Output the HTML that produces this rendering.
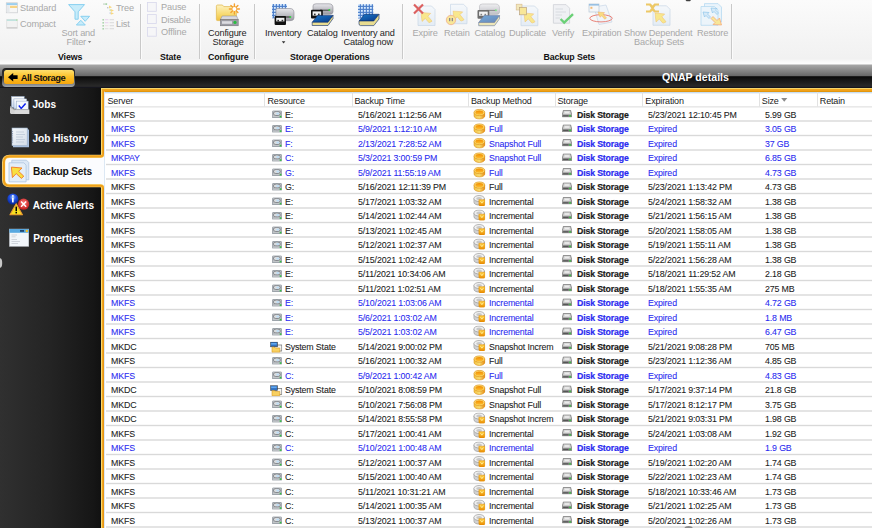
<!DOCTYPE html><html><head><meta charset="utf-8"><style>
*{margin:0;padding:0;box-sizing:border-box}
html,body{width:872px;height:528px;overflow:hidden;background:#fff}
body{position:relative;font-family:"Liberation Sans",sans-serif;}
.a{position:absolute;white-space:nowrap}
#ribbon{position:absolute;left:0;top:0;width:872px;height:64px;background:linear-gradient(#fbfbfb,#f1f1f1 92%,#f8f8f8 96%,#fdfdfd)}
.sep{position:absolute;top:4px;width:1px;height:55px;background:#c9c9c9;box-shadow:1px 0 0 #fbfbfb}
.rt{position:absolute;white-space:nowrap;font-size:9.2px;line-height:9px;letter-spacing:-0.15px;color:#a8a8a8;margin-top:1px}
.rt.en{color:#1e1e1e}
.gl{position:absolute;white-space:nowrap;font-size:8.8px;line-height:9px;font-weight:bold;letter-spacing:-0.12px;color:#111;top:53px}
#bar{position:absolute;left:0;top:64px;width:872px;height:24px;background:linear-gradient(#fafafa 0px,#fafafa 0.4px,#a8a8a8 0.6px,#6a6a6a 11.5px,#5a5a5a 12.2px,#0a0a0a 12.6px,#161616 16px,#2a2a2a 22.4px,#16161e 22.8px,#16161e 24px)}
#nav{position:absolute;left:0;top:88px;width:101px;height:440px;background:linear-gradient(90deg,#303030,#242424 50%,#161616 92%,#111)}
.nt{position:absolute;white-space:nowrap;font-size:10.1px;line-height:10px;font-weight:bold;color:#fff}
#frame{position:absolute;left:101px;top:88px;width:771px;height:440px;border-left:1px solid #f3d27a;border-top:1px solid #f3d27a;}
#frame2{position:absolute;left:102px;top:89px;width:770px;height:439px;border-left:2px solid #f0a21c;border-top:2px solid #f0a21c;}
#grid{position:absolute;left:104px;top:92px;width:768px;height:436px;background:#fff;border-left:1px solid #dce8f4;border-top:1px solid #c8def2;box-shadow:inset 0 1px 0 #eef2f6;overflow:hidden}
.c{position:absolute;white-space:nowrap;font-size:9.4px;line-height:10px;letter-spacing:-0.15px;color:#1a1a1a;-webkit-text-stroke:0.08px currentColor;transform:scaleX(.94);transform-origin:0 0}
.b{color:#2a2af0}
.bd{font-weight:bold;font-size:9.3px;letter-spacing:-0.16px;-webkit-text-stroke:0.2px currentColor}
.h{position:absolute;white-space:nowrap;font-size:9px;line-height:10px;letter-spacing:-0.15px;color:#1a1a1a}
</style></head><body>
<div id="ribbon">
<div class="sep" style="left:139.6px"></div>
<div class="sep" style="left:199.2px"></div>
<div class="sep" style="left:254px"></div>
<div class="sep" style="left:401.8px"></div>
<div class="sep" style="left:731.2px"></div>
<div class="rt" style="left:20px;top:3px">Standard</div>
<div class="rt" style="left:20px;top:19px">Compact</div>
<div class="rt" style="left:61.5px;top:28px">Sort and</div>
<div class="rt" style="left:66.5px;top:37px">Filter</div>
<div class="rt" style="left:116px;top:3px">Tree</div>
<div class="rt" style="left:116px;top:19px">List</div>
<div class="gl" style="left:58px">Views</div>
<div class="rt" style="left:161px;top:2.4px">Pause</div>
<div class="rt" style="left:161px;top:14.9px">Disable</div>
<div class="rt" style="left:161px;top:27.4px">Offline</div>
<div class="gl" style="left:160px">State</div>
<div class="rt en" style="left:208px;top:28px">Configure</div>
<div class="rt en" style="left:212.5px;top:37px">Storage</div>
<div class="gl" style="left:208px">Configure</div>
<div class="rt en" style="left:265px;top:28px">Inventory</div>
<div class="rt en" style="left:307px;top:28px">Catalog</div>
<div class="rt en" style="left:341px;top:28px">Inventory and</div>
<div class="rt en" style="left:343.5px;top:37px">Catalog now</div>
<div class="gl" style="left:290px">Storage Operations</div>
<div class="rt" style="left:412.5px;top:28px">Expire</div>
<div class="rt" style="left:444px;top:28px">Retain</div>
<div class="rt" style="left:474.5px;top:28px">Catalog</div>
<div class="rt" style="left:509px;top:28px">Duplicate</div>
<div class="rt" style="left:552px;top:28px">Verify</div>
<div class="rt" style="left:582px;top:28px">Expiration</div>
<div class="rt" style="left:624px;top:28px">Show Dependent</div>
<div class="rt" style="left:697px;top:28px">Restore</div>
<div class="rt" style="left:634px;top:37px">Backup Sets</div>
<div class="gl" style="left:543.5px">Backup Sets</div>
</div>
<div id="bar"></div>
<div class="a" style="left:662px;top:72px;font-size:10.6px;line-height:11px;font-weight:bold;color:#fff">QNAP details</div>
<div class="a" style="left:2.2px;top:67.8px;width:73.2px;height:18.8px;border-radius:4px;background:linear-gradient(#1e1e1e,#3a3a3a 50%,#a0a6ac)"></div>
<div class="a" style="left:4px;top:69.6px;width:69.6px;height:14.8px;border-radius:2.5px;background:linear-gradient(#ffe070,#fcc22c 45%,#f5a50c)"></div>
<div class="a" style="left:20.8px;top:72.8px;font-size:9.4px;line-height:10px;font-weight:bold;letter-spacing:-0.45px;color:#111">All Storage</div>
<div id="nav"></div>
<div class="nt" style="left:32.5px;top:99.8px">Jobs</div>
<div class="nt" style="left:32.5px;top:133.8px">Job History</div>
<svg class="a" style="left:0;top:0" width="872" height="528"><path d="M104.5 156.4H9.5Q3.5 156.4 3.5 162.4V179.7Q3.5 185.7 9.5 185.7H104.5Z" fill="#fbfcfe"/><path d="M872 89.6H102.6V154.2Q102.6 156.4 100.4 156.4H9.5Q3.6 156.4 3.6 162.4V179.7Q3.6 185.7 9.5 185.7H100.4Q102.6 185.7 102.6 187.9V528" fill="none" stroke="#f5d47a" stroke-width="3.2"/><path d="M872 89.9H102.9V154.2Q102.9 156.4 100.7 156.4H9.5Q3.9 156.4 3.9 162.4V179.7Q3.9 185.7 9.5 185.7H100.7Q102.9 185.7 102.9 187.9V528" fill="none" stroke="#f0a11a" stroke-width="2.1"/><path d="M872 91.5H104.5" fill="none" stroke="#e2960e" stroke-width="1"/><path d="M103.8 91V154.2M103.8 187.9V528" fill="none" stroke="#dc8c0c" stroke-width="0.8"/><path d="M872 88.6H101.6V154.6M101.6 187.5V528" fill="none" stroke="#f8dc70" stroke-width="0.8"/></svg>
<div class="nt" style="left:33px;top:167px;color:#111;letter-spacing:-0.15px">Backup Sets</div>
<div class="nt" style="left:32.7px;top:200.8px">Active Alerts</div>
<div class="nt" style="left:33.2px;top:233.8px">Properties</div>
<div id="grid"></div>
<div class="a" style="left:264.3px;top:92px;width:1px;height:14.5px;background:#e2e2e2"></div>
<div class="a" style="left:352.0px;top:92px;width:1px;height:14.5px;background:#e2e2e2"></div>
<div class="a" style="left:467.9px;top:92px;width:1px;height:14.5px;background:#e2e2e2"></div>
<div class="a" style="left:555.1px;top:92px;width:1px;height:14.5px;background:#e2e2e2"></div>
<div class="a" style="left:642.2px;top:92px;width:1px;height:14.5px;background:#e2e2e2"></div>
<div class="a" style="left:758.7px;top:92px;width:1px;height:14.5px;background:#e2e2e2"></div>
<div class="a" style="left:816.8px;top:92px;width:1px;height:14.5px;background:#e2e2e2"></div>
<div class="h" style="left:107.5px;top:95.5px">Server</div>
<div class="h" style="left:267.5px;top:95.5px">Resource</div>
<div class="h" style="left:354.5px;top:95.5px">Backup Time</div>
<div class="h" style="left:471px;top:95.5px">Backup Method</div>
<div class="h" style="left:557.5px;top:95.5px">Storage</div>
<div class="h" style="left:645.3px;top:95.5px">Expiration</div>
<div class="h" style="left:761.8px;top:95.5px">Size</div>
<div class="h" style="left:819.8px;top:95.5px">Retain</div>
<svg class="a" style="left:780px;top:97px" width="9" height="6"><path d="M1.2 1H7.3L4.25 4.8Z" fill="#8a8a8a"/></svg>
<svg class="a" style="left:0;top:0" width="872" height="528"><rect x="105" y="106.2" width="767" height="1.3" fill="#e4e4e4"/><rect x="106" y="120.30" width="766" height="1.4" fill="#d9d9d9"/><rect x="106" y="134.80" width="766" height="1.4" fill="#d9d9d9"/><rect x="106" y="149.30" width="766" height="1.4" fill="#d9d9d9"/><rect x="106" y="163.80" width="766" height="1.4" fill="#d9d9d9"/><rect x="106" y="178.30" width="766" height="1.4" fill="#d9d9d9"/><rect x="106" y="192.80" width="766" height="1.4" fill="#d9d9d9"/><rect x="106" y="207.30" width="766" height="1.4" fill="#d9d9d9"/><rect x="106" y="221.80" width="766" height="1.4" fill="#d9d9d9"/><rect x="106" y="236.30" width="766" height="1.4" fill="#d9d9d9"/><rect x="106" y="250.80" width="766" height="1.4" fill="#d9d9d9"/><rect x="106" y="265.30" width="766" height="1.4" fill="#d9d9d9"/><rect x="106" y="279.80" width="766" height="1.4" fill="#d9d9d9"/><rect x="106" y="294.30" width="766" height="1.4" fill="#d9d9d9"/><rect x="106" y="308.80" width="766" height="1.4" fill="#d9d9d9"/><rect x="106" y="323.30" width="766" height="1.4" fill="#d9d9d9"/><rect x="106" y="337.80" width="766" height="1.4" fill="#d9d9d9"/><rect x="106" y="352.30" width="766" height="1.4" fill="#d9d9d9"/><rect x="106" y="366.80" width="766" height="1.4" fill="#d9d9d9"/><rect x="106" y="381.30" width="766" height="1.4" fill="#d9d9d9"/><rect x="106" y="395.80" width="766" height="1.4" fill="#d9d9d9"/><rect x="106" y="410.30" width="766" height="1.4" fill="#d9d9d9"/><rect x="106" y="424.80" width="766" height="1.4" fill="#d9d9d9"/><rect x="106" y="439.30" width="766" height="1.4" fill="#d9d9d9"/><rect x="106" y="453.80" width="766" height="1.4" fill="#d9d9d9"/><rect x="106" y="468.30" width="766" height="1.4" fill="#d9d9d9"/><rect x="106" y="482.80" width="766" height="1.4" fill="#d9d9d9"/><rect x="106" y="497.30" width="766" height="1.4" fill="#d9d9d9"/><rect x="106" y="511.80" width="766" height="1.4" fill="#d9d9d9"/><rect x="106" y="526.30" width="766" height="1.4" fill="#d9d9d9"/></svg>
<div class="c" style="left:110.7px;top:109.50px">MKFS</div>
<div class="c" style="left:285px;top:109.50px">E:</div>
<div class="c" style="left:358px;top:109.50px">5/16/2021 1:12:56 AM</div>
<div class="c" style="left:488.7px;top:109.50px">Full</div>
<div class="c bd" style="left:577px;top:109.50px">Disk Storage</div>
<div class="c" style="left:648.2px;top:109.50px">5/23/2021 12:10:45 PM</div>
<div class="c" style="left:764.5px;top:109.50px">5.99 GB</div>
<div class="c b" style="left:110.7px;top:124.00px">MKFS</div>
<div class="c b" style="left:285px;top:124.00px">E:</div>
<div class="c b" style="left:358px;top:124.00px">5/9/2021 1:12:10 AM</div>
<div class="c b" style="left:488.7px;top:124.00px">Full</div>
<div class="c b bd" style="left:577px;top:124.00px">Disk Storage</div>
<div class="c b" style="left:648.2px;top:124.00px">Expired</div>
<div class="c b" style="left:764.5px;top:124.00px">3.05 GB</div>
<div class="c b" style="left:110.7px;top:138.50px">MKFS</div>
<div class="c b" style="left:285px;top:138.50px">F:</div>
<div class="c b" style="left:358px;top:138.50px">2/13/2021 7:28:52 AM</div>
<div class="c b" style="left:488.7px;top:138.50px">Snapshot Full</div>
<div class="c b bd" style="left:577px;top:138.50px">Disk Storage</div>
<div class="c b" style="left:648.2px;top:138.50px">Expired</div>
<div class="c b" style="left:764.5px;top:138.50px">37 GB</div>
<div class="c b" style="left:110.7px;top:153.00px">MKPAY</div>
<div class="c b" style="left:285px;top:153.00px">C:</div>
<div class="c b" style="left:358px;top:153.00px">5/3/2021 3:00:59 PM</div>
<div class="c b" style="left:488.7px;top:153.00px">Snapshot Full</div>
<div class="c b bd" style="left:577px;top:153.00px">Disk Storage</div>
<div class="c b" style="left:648.2px;top:153.00px">Expired</div>
<div class="c b" style="left:764.5px;top:153.00px">6.85 GB</div>
<div class="c b" style="left:110.7px;top:167.50px">MKFS</div>
<div class="c b" style="left:285px;top:167.50px">G:</div>
<div class="c b" style="left:358px;top:167.50px">5/9/2021 11:55:19 AM</div>
<div class="c b" style="left:488.7px;top:167.50px">Full</div>
<div class="c b bd" style="left:577px;top:167.50px">Disk Storage</div>
<div class="c b" style="left:648.2px;top:167.50px">Expired</div>
<div class="c b" style="left:764.5px;top:167.50px">4.73 GB</div>
<div class="c" style="left:110.7px;top:182.00px">MKFS</div>
<div class="c" style="left:285px;top:182.00px">G:</div>
<div class="c" style="left:358px;top:182.00px">5/16/2021 12:11:39 PM</div>
<div class="c" style="left:488.7px;top:182.00px">Full</div>
<div class="c bd" style="left:577px;top:182.00px">Disk Storage</div>
<div class="c" style="left:648.2px;top:182.00px">5/23/2021 1:13:42 PM</div>
<div class="c" style="left:764.5px;top:182.00px">4.73 GB</div>
<div class="c" style="left:110.7px;top:196.50px">MKFS</div>
<div class="c" style="left:285px;top:196.50px">E:</div>
<div class="c" style="left:358px;top:196.50px">5/17/2021 1:03:32 AM</div>
<div class="c" style="left:488.7px;top:196.50px">Incremental</div>
<div class="c bd" style="left:577px;top:196.50px">Disk Storage</div>
<div class="c" style="left:648.2px;top:196.50px">5/24/2021 1:58:32 AM</div>
<div class="c" style="left:764.5px;top:196.50px">1.38 GB</div>
<div class="c" style="left:110.7px;top:211.00px">MKFS</div>
<div class="c" style="left:285px;top:211.00px">E:</div>
<div class="c" style="left:358px;top:211.00px">5/14/2021 1:02:44 AM</div>
<div class="c" style="left:488.7px;top:211.00px">Incremental</div>
<div class="c bd" style="left:577px;top:211.00px">Disk Storage</div>
<div class="c" style="left:648.2px;top:211.00px">5/21/2021 1:56:15 AM</div>
<div class="c" style="left:764.5px;top:211.00px">1.38 GB</div>
<div class="c" style="left:110.7px;top:225.50px">MKFS</div>
<div class="c" style="left:285px;top:225.50px">E:</div>
<div class="c" style="left:358px;top:225.50px">5/13/2021 1:02:45 AM</div>
<div class="c" style="left:488.7px;top:225.50px">Incremental</div>
<div class="c bd" style="left:577px;top:225.50px">Disk Storage</div>
<div class="c" style="left:648.2px;top:225.50px">5/20/2021 1:58:05 AM</div>
<div class="c" style="left:764.5px;top:225.50px">1.38 GB</div>
<div class="c" style="left:110.7px;top:240.00px">MKFS</div>
<div class="c" style="left:285px;top:240.00px">E:</div>
<div class="c" style="left:358px;top:240.00px">5/12/2021 1:02:37 AM</div>
<div class="c" style="left:488.7px;top:240.00px">Incremental</div>
<div class="c bd" style="left:577px;top:240.00px">Disk Storage</div>
<div class="c" style="left:648.2px;top:240.00px">5/19/2021 1:55:11 AM</div>
<div class="c" style="left:764.5px;top:240.00px">1.38 GB</div>
<div class="c" style="left:110.7px;top:254.50px">MKFS</div>
<div class="c" style="left:285px;top:254.50px">E:</div>
<div class="c" style="left:358px;top:254.50px">5/15/2021 1:02:42 AM</div>
<div class="c" style="left:488.7px;top:254.50px">Incremental</div>
<div class="c bd" style="left:577px;top:254.50px">Disk Storage</div>
<div class="c" style="left:648.2px;top:254.50px">5/22/2021 1:56:28 AM</div>
<div class="c" style="left:764.5px;top:254.50px">1.38 GB</div>
<div class="c" style="left:110.7px;top:269.00px">MKFS</div>
<div class="c" style="left:285px;top:269.00px">E:</div>
<div class="c" style="left:358px;top:269.00px">5/11/2021 10:34:06 AM</div>
<div class="c" style="left:488.7px;top:269.00px">Incremental</div>
<div class="c bd" style="left:577px;top:269.00px">Disk Storage</div>
<div class="c" style="left:648.2px;top:269.00px">5/18/2021 11:29:52 AM</div>
<div class="c" style="left:764.5px;top:269.00px">2.18 GB</div>
<div class="c" style="left:110.7px;top:283.50px">MKFS</div>
<div class="c" style="left:285px;top:283.50px">E:</div>
<div class="c" style="left:358px;top:283.50px">5/11/2021 1:02:51 AM</div>
<div class="c" style="left:488.7px;top:283.50px">Incremental</div>
<div class="c bd" style="left:577px;top:283.50px">Disk Storage</div>
<div class="c" style="left:648.2px;top:283.50px">5/18/2021 1:55:35 AM</div>
<div class="c" style="left:764.5px;top:283.50px">275 MB</div>
<div class="c b" style="left:110.7px;top:298.00px">MKFS</div>
<div class="c b" style="left:285px;top:298.00px">E:</div>
<div class="c b" style="left:358px;top:298.00px">5/10/2021 1:03:06 AM</div>
<div class="c b" style="left:488.7px;top:298.00px">Incremental</div>
<div class="c b bd" style="left:577px;top:298.00px">Disk Storage</div>
<div class="c b" style="left:648.2px;top:298.00px">Expired</div>
<div class="c b" style="left:764.5px;top:298.00px">4.72 GB</div>
<div class="c b" style="left:110.7px;top:312.50px">MKFS</div>
<div class="c b" style="left:285px;top:312.50px">E:</div>
<div class="c b" style="left:358px;top:312.50px">5/6/2021 1:03:02 AM</div>
<div class="c b" style="left:488.7px;top:312.50px">Incremental</div>
<div class="c b bd" style="left:577px;top:312.50px">Disk Storage</div>
<div class="c b" style="left:648.2px;top:312.50px">Expired</div>
<div class="c b" style="left:764.5px;top:312.50px">1.8 MB</div>
<div class="c b" style="left:110.7px;top:327.00px">MKFS</div>
<div class="c b" style="left:285px;top:327.00px">E:</div>
<div class="c b" style="left:358px;top:327.00px">5/5/2021 1:03:02 AM</div>
<div class="c b" style="left:488.7px;top:327.00px">Incremental</div>
<div class="c b bd" style="left:577px;top:327.00px">Disk Storage</div>
<div class="c b" style="left:648.2px;top:327.00px">Expired</div>
<div class="c b" style="left:764.5px;top:327.00px">6.47 GB</div>
<div class="c" style="left:110.7px;top:341.50px">MKDC</div>
<div class="c" style="left:285px;top:341.50px">System State</div>
<div class="c" style="left:358px;top:341.50px">5/14/2021 9:00:02 PM</div>
<div class="c" style="left:488.7px;top:341.50px">Snapshot Increm</div>
<div class="c bd" style="left:577px;top:341.50px">Disk Storage</div>
<div class="c" style="left:648.2px;top:341.50px">5/21/2021 9:08:28 PM</div>
<div class="c" style="left:764.5px;top:341.50px">705 MB</div>
<div class="c" style="left:110.7px;top:356.00px">MKFS</div>
<div class="c" style="left:285px;top:356.00px">C:</div>
<div class="c" style="left:358px;top:356.00px">5/16/2021 1:00:32 AM</div>
<div class="c" style="left:488.7px;top:356.00px">Full</div>
<div class="c bd" style="left:577px;top:356.00px">Disk Storage</div>
<div class="c" style="left:648.2px;top:356.00px">5/23/2021 1:12:36 AM</div>
<div class="c" style="left:764.5px;top:356.00px">4.85 GB</div>
<div class="c b" style="left:110.7px;top:370.50px">MKFS</div>
<div class="c b" style="left:285px;top:370.50px">C:</div>
<div class="c b" style="left:358px;top:370.50px">5/9/2021 1:00:42 AM</div>
<div class="c b" style="left:488.7px;top:370.50px">Full</div>
<div class="c b bd" style="left:577px;top:370.50px">Disk Storage</div>
<div class="c b" style="left:648.2px;top:370.50px">Expired</div>
<div class="c b" style="left:764.5px;top:370.50px">4.83 GB</div>
<div class="c" style="left:110.7px;top:385.00px">MKDC</div>
<div class="c" style="left:285px;top:385.00px">System State</div>
<div class="c" style="left:358px;top:385.00px">5/10/2021 8:08:59 PM</div>
<div class="c" style="left:488.7px;top:385.00px">Snapshot Full</div>
<div class="c bd" style="left:577px;top:385.00px">Disk Storage</div>
<div class="c" style="left:648.2px;top:385.00px">5/17/2021 9:37:14 PM</div>
<div class="c" style="left:764.5px;top:385.00px">21.8 GB</div>
<div class="c" style="left:110.7px;top:399.50px">MKDC</div>
<div class="c" style="left:285px;top:399.50px">C:</div>
<div class="c" style="left:358px;top:399.50px">5/10/2021 7:56:08 PM</div>
<div class="c" style="left:488.7px;top:399.50px">Snapshot Full</div>
<div class="c bd" style="left:577px;top:399.50px">Disk Storage</div>
<div class="c" style="left:648.2px;top:399.50px">5/17/2021 8:12:17 PM</div>
<div class="c" style="left:764.5px;top:399.50px">3.75 GB</div>
<div class="c" style="left:110.7px;top:414.00px">MKDC</div>
<div class="c" style="left:285px;top:414.00px">C:</div>
<div class="c" style="left:358px;top:414.00px">5/14/2021 8:55:58 PM</div>
<div class="c" style="left:488.7px;top:414.00px">Snapshot Increm</div>
<div class="c bd" style="left:577px;top:414.00px">Disk Storage</div>
<div class="c" style="left:648.2px;top:414.00px">5/21/2021 9:03:31 PM</div>
<div class="c" style="left:764.5px;top:414.00px">1.98 GB</div>
<div class="c" style="left:110.7px;top:428.50px">MKFS</div>
<div class="c" style="left:285px;top:428.50px">C:</div>
<div class="c" style="left:358px;top:428.50px">5/17/2021 1:00:41 AM</div>
<div class="c" style="left:488.7px;top:428.50px">Incremental</div>
<div class="c bd" style="left:577px;top:428.50px">Disk Storage</div>
<div class="c" style="left:648.2px;top:428.50px">5/24/2021 1:03:08 AM</div>
<div class="c" style="left:764.5px;top:428.50px">1.92 GB</div>
<div class="c b" style="left:110.7px;top:443.00px">MKFS</div>
<div class="c b" style="left:285px;top:443.00px">C:</div>
<div class="c b" style="left:358px;top:443.00px">5/10/2021 1:00:48 AM</div>
<div class="c b" style="left:488.7px;top:443.00px">Incremental</div>
<div class="c b bd" style="left:577px;top:443.00px">Disk Storage</div>
<div class="c b" style="left:648.2px;top:443.00px">Expired</div>
<div class="c b" style="left:764.5px;top:443.00px">1.9 GB</div>
<div class="c" style="left:110.7px;top:457.50px">MKFS</div>
<div class="c" style="left:285px;top:457.50px">C:</div>
<div class="c" style="left:358px;top:457.50px">5/12/2021 1:00:37 AM</div>
<div class="c" style="left:488.7px;top:457.50px">Incremental</div>
<div class="c bd" style="left:577px;top:457.50px">Disk Storage</div>
<div class="c" style="left:648.2px;top:457.50px">5/19/2021 1:02:20 AM</div>
<div class="c" style="left:764.5px;top:457.50px">1.74 GB</div>
<div class="c" style="left:110.7px;top:472.00px">MKFS</div>
<div class="c" style="left:285px;top:472.00px">C:</div>
<div class="c" style="left:358px;top:472.00px">5/15/2021 1:00:40 AM</div>
<div class="c" style="left:488.7px;top:472.00px">Incremental</div>
<div class="c bd" style="left:577px;top:472.00px">Disk Storage</div>
<div class="c" style="left:648.2px;top:472.00px">5/22/2021 1:02:23 AM</div>
<div class="c" style="left:764.5px;top:472.00px">1.74 GB</div>
<div class="c" style="left:110.7px;top:486.50px">MKFS</div>
<div class="c" style="left:285px;top:486.50px">C:</div>
<div class="c" style="left:358px;top:486.50px">5/11/2021 10:31:21 AM</div>
<div class="c" style="left:488.7px;top:486.50px">Incremental</div>
<div class="c bd" style="left:577px;top:486.50px">Disk Storage</div>
<div class="c" style="left:648.2px;top:486.50px">5/18/2021 10:33:46 AM</div>
<div class="c" style="left:764.5px;top:486.50px">1.73 GB</div>
<div class="c" style="left:110.7px;top:501.00px">MKFS</div>
<div class="c" style="left:285px;top:501.00px">C:</div>
<div class="c" style="left:358px;top:501.00px">5/14/2021 1:00:35 AM</div>
<div class="c" style="left:488.7px;top:501.00px">Incremental</div>
<div class="c bd" style="left:577px;top:501.00px">Disk Storage</div>
<div class="c" style="left:648.2px;top:501.00px">5/21/2021 1:02:25 AM</div>
<div class="c" style="left:764.5px;top:501.00px">1.73 GB</div>
<div class="c" style="left:110.7px;top:515.50px">MKFS</div>
<div class="c" style="left:285px;top:515.50px">C:</div>
<div class="c" style="left:358px;top:515.50px">5/13/2021 1:00:37 AM</div>
<div class="c" style="left:488.7px;top:515.50px">Incremental</div>
<div class="c bd" style="left:577px;top:515.50px">Disk Storage</div>
<div class="c" style="left:648.2px;top:515.50px">5/20/2021 1:02:26 AM</div>
<div class="c" style="left:764.5px;top:515.50px">1.73 GB</div>
<svg class="a" style="left:0;top:0" width="872" height="528">
<defs>
<linearGradient id="gHdd" x1="0" y1="0" x2="0" y2="1"><stop offset="0" stop-color="#9aa2aa"/><stop offset="1" stop-color="#5c636b"/></linearGradient>
<linearGradient id="gSto" x1="0" y1="0" x2="0" y2="1"><stop offset="0" stop-color="#d4d4d4"/><stop offset="0.55" stop-color="#b4b4b4"/><stop offset="1" stop-color="#6e6e6e"/></linearGradient>
<linearGradient id="gCoin" x1="0" y1="0" x2="1" y2="0"><stop offset="0" stop-color="#f2c040"/><stop offset="0.5" stop-color="#f8dc70"/><stop offset="1" stop-color="#e88a10"/></linearGradient>
<linearGradient id="gCoinTop" x1="0" y1="0" x2="0" y2="1"><stop offset="0" stop-color="#f08a00"/><stop offset="1" stop-color="#ffc030"/></linearGradient>
<linearGradient id="gShield" x1="0" y1="0" x2="0" y2="1"><stop offset="0" stop-color="#ffd040"/><stop offset="1" stop-color="#e88800"/></linearGradient>
<symbol id="hdd" viewBox="0 0 10 8" width="10" height="8">
  <path d="M0.9 0.2H9.1L9.8 1.2V7.8H0.2V1.2Z" fill="#8c949c"/>
  <rect x="0.9" y="0.9" width="8.2" height="5" fill="#b8bcc0"/>
  <ellipse cx="4.9" cy="3.3" rx="3.6" ry="2.2" fill="#707478"/>
  <ellipse cx="4.9" cy="3.2" rx="3" ry="1.7" fill="#dadcde"/>
  <ellipse cx="5.8" cy="3.4" rx="1.6" ry="1.1" fill="#bcdcf4"/>
  <rect x="0.9" y="5.9" width="8.2" height="1.2" fill="#c8cacc"/>
  <rect x="7.7" y="5.6" width="1.7" height="1.6" fill="#30c040"/>
</symbol>
<symbol id="sto" viewBox="0 0 10 7.5" width="10" height="7.5">
  <path d="M1.4 0.4H8.6L9.7 4.6V7.1H0.3V4.6Z" fill="#a8a8a8" stroke="#666" stroke-width="0.6"/>
  <path d="M1.9 1H8.1L8.9 4.4H1.1Z" fill="#d6d6d6"/><path d="M3 1.8H6.8L7.2 3.4H2.6Z" fill="#ececec"/>
  <rect x="0.35" y="4.9" width="9.3" height="2.2" fill="#8c8c8c"/>
  <rect x="1.1" y="5.5" width="5.4" height="0.9" fill="#4a4a4a"/>
  <rect x="7.1" y="5.3" width="2" height="1.4" fill="#38c040"/>
</symbol>
<symbol id="coin" viewBox="0 0 12 11" width="12" height="11">
  <path d="M0.5 3.7V7A5.5 3.2 0 0 0 11.5 7V3.7Z" fill="url(#gCoin)" stroke="#d88a10" stroke-width="0.6"/>
  <ellipse cx="6" cy="3.7" rx="5.5" ry="3.2" fill="#fad870" stroke="#d88a10" stroke-width="0.6"/>
  <ellipse cx="6" cy="3.8" rx="4" ry="2.2" fill="url(#gCoinTop)"/>
</symbol>
<symbol id="inc" viewBox="0 0 12 11" width="12" height="11">
  <path d="M0.5 3.4V7A5.3 3 0 0 0 11.1 7V3.4Z" fill="#d2d2d2" stroke="#8c8c8c" stroke-width="0.6"/>
  <ellipse cx="5.8" cy="3.4" rx="5.3" ry="3" fill="#f0f0f0" stroke="#8c8c8c" stroke-width="0.6"/>
  <ellipse cx="5.8" cy="3.5" rx="2.9" ry="1.5" fill="#c8c8c8"/>
  <path d="M5.6 4.6H11.6V9.4Q11.6 11 9.6 11H7.4Q5.6 11 5.6 9.4Z" fill="url(#gShield)" stroke="#e08a00" stroke-width="0.5"/>
  <path d="M7.2 6L8.6 8.1L10 6" fill="none" stroke="#fff2a0" stroke-width="0.9"/>
</symbol>
<symbol id="sys" viewBox="0 0 12 11" width="12" height="11">
  <rect x="4.2" y="3.2" width="7.4" height="6" fill="#f4f4f4" stroke="#7a7a7a" stroke-width="0.8"/>
  <rect x="0.2" y="0.2" width="7" height="4.8" fill="#3070c0" stroke="#3a3a3a" stroke-width="0.6"/>
  <rect x="1" y="1.2" width="5.4" height="1.6" fill="#60a8f0"/>
  <path d="M1.8 5.4H4.6L5.3 6.2H9.6V10.4H1.8Z" fill="#f8d060" stroke="#d89a20" stroke-width="0.6"/>
</symbol>
</defs>
<use href="#hdd" x="272" y="110.20"/><use href="#coin" x="473.4" y="108.80"/><use href="#sto" x="562" y="109.90"/><use href="#hdd" x="272" y="124.70"/><use href="#coin" x="473.4" y="123.30"/><use href="#sto" x="562" y="124.40"/><use href="#hdd" x="272" y="139.20"/><use href="#coin" x="473.4" y="137.80"/><use href="#sto" x="562" y="138.90"/><use href="#hdd" x="272" y="153.70"/><use href="#coin" x="473.4" y="152.30"/><use href="#sto" x="562" y="153.40"/><use href="#hdd" x="272" y="168.20"/><use href="#coin" x="473.4" y="166.80"/><use href="#sto" x="562" y="167.90"/><use href="#hdd" x="272" y="182.70"/><use href="#coin" x="473.4" y="181.30"/><use href="#sto" x="562" y="182.40"/><use href="#hdd" x="272" y="197.20"/><use href="#inc" x="473.3" y="195.10"/><use href="#sto" x="562" y="196.90"/><use href="#hdd" x="272" y="211.70"/><use href="#inc" x="473.3" y="209.60"/><use href="#sto" x="562" y="211.40"/><use href="#hdd" x="272" y="226.20"/><use href="#inc" x="473.3" y="224.10"/><use href="#sto" x="562" y="225.90"/><use href="#hdd" x="272" y="240.70"/><use href="#inc" x="473.3" y="238.60"/><use href="#sto" x="562" y="240.40"/><use href="#hdd" x="272" y="255.20"/><use href="#inc" x="473.3" y="253.10"/><use href="#sto" x="562" y="254.90"/><use href="#hdd" x="272" y="269.70"/><use href="#inc" x="473.3" y="267.60"/><use href="#sto" x="562" y="269.40"/><use href="#hdd" x="272" y="284.20"/><use href="#inc" x="473.3" y="282.10"/><use href="#sto" x="562" y="283.90"/><use href="#hdd" x="272" y="298.70"/><use href="#inc" x="473.3" y="296.60"/><use href="#sto" x="562" y="298.40"/><use href="#hdd" x="272" y="313.20"/><use href="#inc" x="473.3" y="311.10"/><use href="#sto" x="562" y="312.90"/><use href="#hdd" x="272" y="327.70"/><use href="#inc" x="473.3" y="325.60"/><use href="#sto" x="562" y="327.40"/><use href="#sys" x="270.2" y="341.80"/><use href="#inc" x="473.3" y="340.10"/><use href="#sto" x="562" y="341.90"/><use href="#hdd" x="272" y="356.70"/><use href="#coin" x="473.4" y="355.30"/><use href="#sto" x="562" y="356.40"/><use href="#hdd" x="272" y="371.20"/><use href="#coin" x="473.4" y="369.80"/><use href="#sto" x="562" y="370.90"/><use href="#sys" x="270.2" y="385.30"/><use href="#coin" x="473.4" y="384.30"/><use href="#sto" x="562" y="385.40"/><use href="#hdd" x="272" y="400.20"/><use href="#coin" x="473.4" y="398.80"/><use href="#sto" x="562" y="399.90"/><use href="#hdd" x="272" y="414.70"/><use href="#inc" x="473.3" y="412.60"/><use href="#sto" x="562" y="414.40"/><use href="#hdd" x="272" y="429.20"/><use href="#inc" x="473.3" y="427.10"/><use href="#sto" x="562" y="428.90"/><use href="#hdd" x="272" y="443.70"/><use href="#inc" x="473.3" y="441.60"/><use href="#sto" x="562" y="443.40"/><use href="#hdd" x="272" y="458.20"/><use href="#inc" x="473.3" y="456.10"/><use href="#sto" x="562" y="457.90"/><use href="#hdd" x="272" y="472.70"/><use href="#inc" x="473.3" y="470.60"/><use href="#sto" x="562" y="472.40"/><use href="#hdd" x="272" y="487.20"/><use href="#inc" x="473.3" y="485.10"/><use href="#sto" x="562" y="486.90"/><use href="#hdd" x="272" y="501.70"/><use href="#inc" x="473.3" y="499.60"/><use href="#sto" x="562" y="501.40"/><use href="#hdd" x="272" y="516.20"/><use href="#inc" x="473.3" y="514.10"/><use href="#sto" x="562" y="515.90"/>
<defs>
<linearGradient id="gFold" x1="0" y1="0" x2="0" y2="1"><stop offset="0" stop-color="#fdf2c0"/><stop offset="0.6" stop-color="#f8da70"/><stop offset="1" stop-color="#f0c040"/></linearGradient>
<linearGradient id="gBook" x1="0" y1="0" x2="1" y2="1"><stop offset="0" stop-color="#1a78c8"/><stop offset="1" stop-color="#0a3a8a"/></linearGradient>
<linearGradient id="gDrv" x1="0" y1="0" x2="0" y2="1"><stop offset="0" stop-color="#e8e8ec"/><stop offset="1" stop-color="#9a9aa2"/></linearGradient>
<linearGradient id="gDoc" x1="0" y1="0" x2="0" y2="1"><stop offset="0" stop-color="#f4f8fc"/><stop offset="1" stop-color="#dce8f4"/></linearGradient>
<pattern id="pGrid" x="0" y="0" width="3" height="3" patternUnits="userSpaceOnUse"><rect width="3" height="3" fill="#4a7cc8"/><rect x="0.9" y="0.9" width="1.9" height="1.9" fill="#b8d8fa"/><rect x="1.3" y="1.3" width="1.1" height="1.1" fill="#f4faff"/></pattern>
<symbol id="arrowY" viewBox="0 0 12 11" width="12" height="11">
  <path d="M0.4 0.4L10.2 1.4L7.4 4.2L11.6 9.2L8.6 10.8L4.8 6.4L1.6 9.4Z" fill="#f8e060" stroke="#f0b040" stroke-width="0.6"/>
</symbol>
</defs>
<!-- Standard -->
<g opacity="0.75">
 <rect x="6.3" y="2.8" width="11.2" height="10" fill="#f6f6f6" stroke="#b8bcc0" stroke-width="0.7"/>
 <rect x="6.6" y="3.1" width="10.6" height="2" fill="#7cc0ec"/>
 <rect x="10" y="5.8" width="7.2" height="2.2" fill="#f8c860"/>
 <rect x="6.6" y="5.2" width="3" height="7.3" fill="#e2e6ea"/>
</g>
<!-- Compact -->
<g opacity="0.8">
 <rect x="6.8" y="19.6" width="10.4" height="8.8" fill="#f2f2f2" stroke="#d0d0d0" stroke-width="0.6"/>
 <rect x="6.8" y="19.6" width="10.4" height="1.1" fill="#9ad8d0"/>
 <rect x="16.2" y="19.4" width="1.2" height="1.2" fill="#a0d880"/>
 <rect x="6.8" y="27" width="10.4" height="1.4" fill="#c8c8c8"/>
</g>
<!-- Funnel -->
<g fill="#c8ecfa" stroke="#88d0f0" stroke-width="1">
 <path d="M68.6 4.6H84.5L78.2 11.8V19.2H75V11.8Z"/>
 <path d="M80.8 16.3H89.6L85.2 21.3Z"/>
 <path d="M76.4 25H85.3L80.8 20.3Z"/>
</g>
<path d="M87.9 40.9H91.3L89.6 43Z" fill="#8a8a8a"/>
<!-- Tree -->
<g opacity="0.65">
 <rect x="103" y="3.3" width="2" height="1.6" fill="#c0d0c0"/><rect x="105.3" y="3.2" width="1.8" height="1.8" fill="#80c080"/>
 <rect x="107" y="7" width="1.4" height="1.4" fill="#a8a8b0"/>
 <path d="M109 5.5L112 7.2L109 8.6Z" fill="#f8c840"/>
 <rect x="109.6" y="9.3" width="1.2" height="1.6" fill="#90c890"/><path d="M110.8 9L114 10.5L110.8 12Z" fill="#f8c840"/>
 <rect x="109.6" y="12.3" width="1.2" height="1.6" fill="#a0b0e0"/><path d="M110.8 12L114 13.4L110.8 14.8Z" fill="#f8c840"/>
</g>
<!-- List -->
<g opacity="0.6">
 <rect x="102.4" y="19" width="1.6" height="1.6" fill="#80c080"/><rect x="104.8" y="19.2" width="3.6" height="1" fill="#e0b8e8"/><rect x="109.6" y="19.2" width="4.4" height="1" fill="#c8c8c8"/>
 <rect x="102.4" y="22" width="1.6" height="1.6" fill="#80c080"/><rect x="104.8" y="22.2" width="3.6" height="1" fill="#e0b8e8"/><rect x="109.6" y="22.2" width="4.4" height="1" fill="#c8c8c8"/>
 <rect x="102.4" y="25" width="1.6" height="1.6" fill="#80c080"/><rect x="104.8" y="25.2" width="3.6" height="1" fill="#e8d0d8"/><rect x="109.6" y="25.2" width="4.4" height="1" fill="#c8c8c8"/>
 <rect x="102.4" y="28" width="1.6" height="1.6" fill="#80c080"/><rect x="104.8" y="28.2" width="3.6" height="1" fill="#d0d0d0"/><rect x="109.6" y="28.2" width="4.4" height="1" fill="#c8c8c8"/>
</g>
<!-- checkboxes -->
<g fill="#f6f6f8" stroke="#d8d8ec" stroke-width="0.8">
 <rect x="147.5" y="2.5" width="8.8" height="8.8"/>
 <rect x="147.5" y="14.6" width="8.8" height="8.8"/>
 <rect x="147.5" y="27.4" width="8.8" height="8.8"/>
</g>
<!-- Configure storage -->
<g>
 <path d="M216.4 6.2Q216.4 5 217.6 5H222.4L223.8 6.6H235.2Q236.4 6.6 236.4 7.8V19.4Q236.4 20.6 235.2 20.6H217.6Q216.4 20.6 216.4 19.4Z" fill="url(#gFold)" stroke="#e2bc58" stroke-width="0.8"/>
 <g stroke="#f5a030" stroke-width="1.4" stroke-linecap="round">
  <path d="M234.4 4V14M229.4 9H239.4M230.9 5.5L237.9 12.5M237.9 5.5L230.9 12.5"/>
 </g>
 <circle cx="234.4" cy="9" r="2" fill="#fff"/>
 <path d="M222.2 16H236.6L238.2 19.6H220.4Z" fill="#d8d8de" stroke="#8a8a92" stroke-width="0.5"/>
 <rect x="220.4" y="19.6" width="17.8" height="6.2" fill="#9c9ca4" stroke="#6a6a72" stroke-width="0.5"/>
 <rect x="222" y="21.2" width="10" height="2.6" fill="#dcdce2"/>
 <circle cx="235" cy="22.4" r="1.6" fill="#28c040"/>
</g>
<!-- Inventory -->
<g>
 <rect x="272" y="4" width="15" height="14.3" fill="url(#pGrid)"/>
 <path d="M276 9.5Q276 8.5 278 8.5H290Q294 8.5 294 13V18Q294 20.7 290 20.7H276Z" fill="url(#gDrv)" stroke="#8a8a92" stroke-width="0.6"/>
 <rect x="279" y="16.4" width="11" height="1.2" fill="#404040"/>
 <circle cx="290.3" cy="17" r="1" fill="#30d040"/>
 <rect x="274.6" y="16" width="11.4" height="9" rx="1" fill="#111"/>
 <rect x="276.2" y="17.8" width="8.2" height="3.6" fill="#f0f0f0"/>
 <rect x="277.4" y="19.8" width="1.6" height="1.6" fill="#333"/><rect x="281.6" y="19.8" width="1.6" height="1.6" fill="#333"/>
 <path d="M281.8 41.3H285.4L283.6 43.4Z" fill="#333"/>
</g>
<!-- Catalog (enabled) -->
<g id="catIcon">
 <path d="M313 6Q313 3.8 316 3.8H329Q333 3.8 333 8V12Q333 14.3 329 14.3H313Z" fill="url(#gDrv)" stroke="#8a8a92" stroke-width="0.6"/>
 <rect x="320" y="9.7" width="9" height="1" fill="#404040"/>
 <circle cx="329.4" cy="10" r="1" fill="#30d040"/>
 <rect x="311" y="9.8" width="11.8" height="8.7" rx="1" fill="#111"/>
 <rect x="312.6" y="11.4" width="8.6" height="4.2" fill="#f0f0f0"/>
 <rect x="314" y="13.6" width="1.6" height="1.6" fill="#333"/><rect x="318" y="13.6" width="1.6" height="1.6" fill="#333"/>
 <path d="M312.2 22.3L317.6 15.4H333L328 22.3Z" fill="url(#gBook)" stroke="#0a2a6a" stroke-width="0.6"/>
 <path d="M312.2 22.3H328L333 15.4V18.6L328 25.5H312.2Z" fill="#e8dc90" stroke="#0a2a6a" stroke-width="0.6"/>
</g>
<!-- Inventory and catalog now -->
<g>
 <rect x="358" y="4.2" width="15.3" height="14.3" fill="url(#pGrid)"/>
 <path d="M359 21L364.5 14.3H379L373.8 21Z" fill="url(#gBook)" stroke="#0a2a6a" stroke-width="0.6"/>
 <path d="M359 21H373.8L379 14.3V19L373.8 25.6H360.5Q359 25.6 359 23.5Z" fill="#e8dc90" stroke="#0a2a6a" stroke-width="0.6"/>
</g>
<!-- Backup sets group (disabled) -->
<g opacity="0.7">
 <!-- Expire -->
 <path d="M418 6H431.5L435 9.5V25.5H418Z" fill="url(#gDoc)" stroke="#b4c8e0" stroke-width="0.7"/>
 <use href="#arrowY" x="420.5" y="12"/>
 <path d="M414 4.5L423 13.5M423 4.5L414 13.5" stroke="#d02020" stroke-width="2.2"/>
 <!-- Retain -->
 <path d="M450.5 4.3H463.5L467 7.8V23.7H450.5Z" fill="url(#gDoc)" stroke="#b4c8e0" stroke-width="0.7"/>
 <use href="#arrowY" x="452.5" y="10.5"/>
 <circle cx="451" cy="20" r="4.7" fill="#f8e070" stroke="#f09060" stroke-width="0.8"/>
 <rect x="449.3" y="18" width="0.9" height="3.2" fill="#202060"/><rect x="451.8" y="18" width="0.9" height="3.2" fill="#202060"/>
</g>
<g opacity="0.6" transform="translate(166.5,0.2)">
 <use href="#catIcon"/>
</g>
<g opacity="0.7">
 <!-- Duplicate -->
 <path d="M521 6H534.5L537.8 9.3V25.7H521Z" fill="url(#gDoc)" stroke="#b4c8e0" stroke-width="0.7"/>
 <use href="#arrowY" x="523.5" y="12.5"/>
 <rect x="516.2" y="4.2" width="5.8" height="5.8" fill="#f0e0a0" stroke="#c8a060" stroke-width="0.6"/>
 <rect x="519.6" y="7.4" width="7" height="7.4" fill="#f8e070" stroke="#a08050" stroke-width="0.7"/>
 <!-- Verify -->
 <path d="M553.4 4.6H566L569.6 8.2V23.2H553.4Z" fill="#eceef2" stroke="#b8bcc4" stroke-width="0.7"/>
 <path d="M555.5 9H563M555.5 12H566M555.5 15H562M555.5 18H560" stroke="#c4c8d0" stroke-width="0.8"/>
 <path d="M560.6 19L564.2 22.6L573 14.2" fill="none" stroke="#30c040" stroke-width="2.4"/>
 <!-- Expiration -->
 <path d="M594 7L606 5L612 22L599 24.5Z" fill="#eef4fa" stroke="#b4c8e0" stroke-width="0.7"/>
 <rect x="589" y="4" width="10" height="8" fill="#f4f6f8" stroke="#8ea8c0" stroke-width="0.6"/>
 <rect x="589" y="4" width="10" height="1.6" fill="#70a8d8"/>
 <rect x="590.4" y="6.8" width="2" height="2" fill="#f0a040"/>
 <ellipse cx="601" cy="18.3" rx="11.2" ry="3.6" fill="none" stroke="#e04030" stroke-width="0.9"/>
 <path d="M598 12L604.5 12.6L603.2 14.2L606.5 18L604.7 19.2L601.8 15.8L600 17.2Z" fill="#f8d050" stroke="#f09030" stroke-width="0.5"/>
 <!-- Show dependent -->
 <path d="M653 5.8H666.5L670 9.3V25.3H653Z" fill="url(#gDoc)" stroke="#b4c8e0" stroke-width="0.7"/>
 <use href="#arrowY" x="654.5" y="12.6"/>
 <path d="M646 4.6H650.2L652.5 7L654.8 4.6H659M646 11.6H650.2L652.5 9.2L654.8 11.6H659M650 4.6L655 11.6M655 4.6L650 11.6" fill="none" stroke="#e8b428" stroke-width="2"/>
 <!-- Restore -->
 <path d="M704.5 3.6H718L721.5 7.1V22H704.5Z" fill="#e4f2fc" stroke="#90c8ec" stroke-width="0.7"/>
 <path d="M701 6.5H714.5L718 10V25.3H701Z" fill="#e8f4fc" stroke="#90c8ec" stroke-width="0.7"/>
 <path d="M703 12L709 12.5L707.5 14L710.5 17L709 18.5L706 15.5L704.5 17Z" fill="#c8e4f8" stroke="#50a8e0" stroke-width="0.6"/>
 <path d="M711 8L717 8.5L715.5 10L718.5 13L717 14.5L714 11.5L712.5 13Z" fill="#c8e4f8" stroke="#50a8e0" stroke-width="0.6"/>
 <path d="M721.5 25L713 24.5L715 22.5L711 18.5L713 16.5L717 20.5L719.5 18Z" fill="#f8e070" stroke="#f08040" stroke-width="0.7"/>
</g>
<path d="M685.5 0H691L690 1.3H686.5Z" fill="#404040"/>

<defs>
<linearGradient id="gPage" x1="0" y1="0" x2="1" y2="1"><stop offset="0" stop-color="#f4f8fc"/><stop offset="1" stop-color="#d4dde8"/></linearGradient>
<linearGradient id="gCard" x1="0" y1="0" x2="0" y2="1"><stop offset="0" stop-color="#ffffff"/><stop offset="1" stop-color="#c8daf0"/></linearGradient>
<radialGradient id="gInfo" cx="0.5" cy="0.35" r="0.6"><stop offset="0" stop-color="#a0c8ff"/><stop offset="0.5" stop-color="#2050e0"/><stop offset="1" stop-color="#0a2aa0"/></radialGradient>
<radialGradient id="gErr" cx="0.5" cy="0.4" r="0.6"><stop offset="0" stop-color="#ff8080"/><stop offset="1" stop-color="#c01818"/></radialGradient>
</defs>
<!-- Jobs -->
<g>
 <rect x="11.4" y="96.4" width="12.8" height="11" fill="url(#gCard)" stroke="#8aa0c0" stroke-width="0.5"/>
 <rect x="13.9" y="98.9" width="12.8" height="10" fill="url(#gCard)" stroke="#8aa0c0" stroke-width="0.5"/>
 <rect x="16.3" y="101.1" width="11.9" height="8.5" fill="#f4f8fc" stroke="#8aa0c0" stroke-width="0.5"/>
 <path d="M18.8 105.6L21.2 108.4L25.6 103.4" fill="none" stroke="#0a20f0" stroke-width="1.5"/>
 <path d="M10 106.2L14.5 109.4H29.2V113.9H10.8L10 112.8Z" fill="#d4d4d4"/>
 <path d="M10 106.2L14.5 109.4H29.2V110.2H14.3L10 107.4Z" fill="#a8a8a8"/>
 <rect x="14.5" y="110.2" width="14.7" height="3.7" fill="#dcdcdc"/>
</g>
<!-- Job history -->
<g>
 <path d="M13 128H27L29 130V147.2H13Z" fill="#a8c0e0"/>
 <rect x="12" y="128" width="15.2" height="17.6" fill="url(#gPage)" stroke="#9cb0c8" stroke-width="0.6"/>
 <path d="M12.5 131V143" stroke="#8090a8" stroke-width="1.2" stroke-dasharray="0.8 1.1"/>
 <path d="M16 132H24M16 134.5H25M16 137H23M16 139.5H25M16 142H24" stroke="#b8c4d4" stroke-width="0.7"/>
</g>
<!-- Backup sets -->
<g>
 <path d="M11.8 160.2H26.5L28.8 162.5V179.8H11.8Z" fill="#dce8f6" stroke="#a8c0dc" stroke-width="0.7"/>
 <path d="M9 162.8H23.8L26.1 165.1V181.9H9Z" fill="#e4eef8" stroke="#a8c0dc" stroke-width="0.7"/>
 <path d="M11.4 167.1L22 168L18.6 171.3L23.8 176.2L21.4 178.4L16.2 173.6L12.4 177.6Z" fill="#f8e040" stroke="#f07828" stroke-width="0.9" stroke-linejoin="round"/>
</g>
<!-- Active alerts -->
<g>
 <circle cx="12.8" cy="199" r="5.5" fill="url(#gInfo)"/>
 <rect x="12" y="197.6" width="1.7" height="4.8" fill="#fff"/><rect x="12" y="195.2" width="1.7" height="1.5" fill="#fff"/>
 <circle cx="23.6" cy="204.2" r="5.6" fill="url(#gErr)"/>
 <path d="M21 201.6L26.2 206.8M26.2 201.6L21 206.8" stroke="#fff" stroke-width="1.4"/>
 <path d="M16.2 203.8L22.4 214.8H10Z" fill="#f8e020" stroke="#f0a030" stroke-width="1.1" stroke-linejoin="round"/>
 <rect x="15.5" y="206.6" width="1.5" height="4.6" fill="#000"/><rect x="15.5" y="212" width="1.5" height="1.4" fill="#000"/>
</g>
<!-- Properties -->
<g>
 <rect x="9.4" y="229" width="19.4" height="17.4" fill="#f2f6fa" stroke="#c0c8d0" stroke-width="0.4"/>
 <rect x="9.4" y="229" width="19.4" height="3.8" fill="#58a8e0"/>
 <rect x="20" y="230" width="4" height="1.8" fill="#204870"/>
 <circle cx="26.8" cy="231" r="1.2" fill="#f8c020"/>
 <path d="M11.5 235H17M11.5 236.8H15.5M11.5 239.5H17M11.5 241.5H20M11.5 243.5H18" stroke="#b8c0c8" stroke-width="0.6"/>
</g>
<!-- all storage arrow -->
<path d="M8 77.2L13.2 73V75.3H17.6V79.1H13.2V81.4Z" fill="#000"/>
<!-- blob -->
<ellipse cx="688.6" cy="529.2" rx="4.4" ry="3.2" fill="#8c8c8c"/>
<ellipse cx="0" cy="263" rx="2.2" ry="4.8" fill="#c8c8c8"/>
</svg>
</body></html>
